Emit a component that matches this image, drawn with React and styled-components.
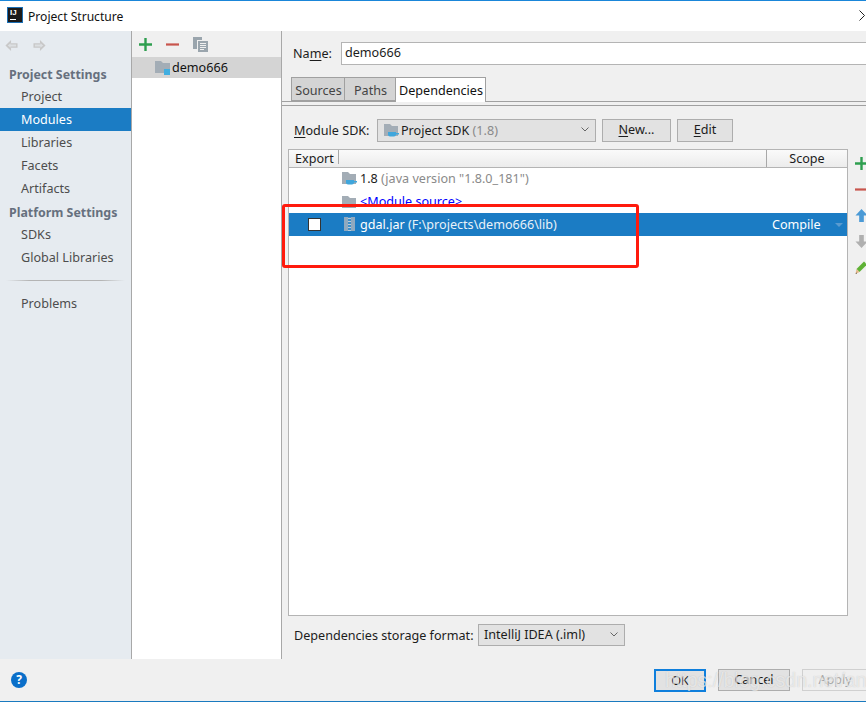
import React from 'react';
import styled, { createGlobalStyle } from 'styled-components';

const GlobalStyle = createGlobalStyle`
  html, body {
    margin: 0;
    padding: 0;
    background: #fff;
  }
  * {
    box-sizing: border-box;
  }
`;

const Window = styled.div`
  position: relative;
  width: 866px;
  height: 702px;
  overflow: hidden;
  display: flex;
  flex-direction: column;
  background: #f0f0f0;
  color: #1c1c1c;
  font-family: 'Noto Sans', 'Open Sans', sans-serif;
  font-size: 12.6px;
  border-top: 1px solid #1a86d9;
  border-bottom: 1px solid #1a7abf;
`;

const TitleBar = styled.div`
  height: 30px;
  flex: none;
  display: flex;
  align-items: center;
  background: #fff;
  padding-left: 7px;
  gap: 5px;
  position: relative;
`;

const TitleText = styled.span`
  font-size: 12.1px;
  color: #111;
`;

const LogoBox = styled.div`
  width: 16px;
  height: 16px;
  margin-top: -2px;
  background: #1a1a1a;
  border: 1px solid #1b6fb5;
  color: #fff;
  font-family: 'Liberation Sans', sans-serif;
  font-size: 8px;
  font-weight: 700;
  line-height: 9px;
  padding-left: 2px;
  position: relative;
  &::after {
    content: '';
    position: absolute;
    left: 2px;
    bottom: 2px;
    width: 6px;
    height: 1px;
    background: #fff;
  }
`;

const CloseGlyph = styled.svg`
  position: absolute;
  right: -2px;
  top: 9px;
`;

const Main = styled.div`
  flex: 1;
  min-height: 0;
  display: flex;
`;

const Sidebar = styled.div`
  width: 132px;
  flex: none;
  background: #e6ebf0;
  border-right: 1px solid #a8a8a8;
`;

const NavArrows = styled.div`
  height: 31px;
  display: flex;
  align-items: center;
  padding: 0 0 3px 5px;
  gap: 15px;
`;

const SectionTitle = styled.div`
  height: 23px;
  line-height: 26px;
  padding-left: 9px;
  font-weight: 700;
  color: #66707e;
  font-size: 12.4px;
`;

const NavItem = styled.div`
  height: 23px;
  line-height: 23px;
  padding-left: 21px;
  color: ${p => (p.$active ? '#fff' : '#4d4d4d')};
  background: ${p => (p.$active ? '#1b7cc4' : 'transparent')};
`;

const NavRule = styled.div`
  height: 1px;
  margin: 11px 6px 11px 6px;
  background: linear-gradient(to right, #e6ebf0, #b4b4b4 20%, #b4b4b4 80%, #e6ebf0);
`;

const ModuleColumn = styled.div`
  width: 150px;
  flex: none;
  display: flex;
  flex-direction: column;
  background: #fff;
  border-right: 1px solid #a8a8a8;
`;

const ModuleToolbar = styled.div`
  height: 26px;
  display: flex;
  align-items: center;
  background: #f0f0f0;
  padding-left: 7px;
  gap: 14px;
`;

const TreeRow = styled.div`
  height: 21px;
  display: flex;
  align-items: center;
  padding: 0 0 1px 23px;
  gap: 1px;
  background: #d4d4d4;
  color: #111;
`;

const Content = styled.div`
  flex: 1;
  min-width: 0;
  display: flex;
  flex-direction: column;
  padding-top: 11px;
  padding-bottom: 13px;
`;

const NameRow = styled.div`
  display: flex;
  align-items: center;
  height: 23px;
  padding-left: 11px;
`;

const NameLabel = styled.span`
  width: 48px;
  flex: none;
`;

const Underlined = styled.span`
  text-decoration: underline;
  text-underline-offset: 2px;
`;

const NameInput = styled.div`
  flex: 1;
  height: 23px;
  line-height: 20px;
  margin-right: -4px;
  padding-left: 3px;
  background: #fff;
  border: 1px solid #b4b4b4;
`;

const TabStrip = styled.div`
  display: flex;
  height: 25px;
  margin-top: 12px;
  padding-left: 9px;
  border-bottom: 1px solid #a0a0a0;
`;

const Tab = styled.div`
  width: ${p => p.$w}px;
  height: ${p => (p.$active ? 25 : 24)}px;
  line-height: 25px;
  padding-left: 1px;
  text-align: center;
  border: 1px solid #a0a0a0;
  border-left: ${p => (p.$first ? '1px solid #a0a0a0' : 'none')};
  border-bottom: ${p => (p.$active ? 'none' : '1px solid #a0a0a0')};
  background: ${p => (p.$active ? '#fff' : '#d4d4d4')};
  color: ${p => (p.$active ? '#111' : '#444')};
`;

const Pane = styled.div`
  flex: 1;
  min-height: 0;
  margin-top: 3px;
  padding: 13px 0 0 6px;
  border-top: 1px solid #a0a0a0;
  display: flex;
  flex-direction: column;
`;

const SdkRow = styled.div`
  display: flex;
  align-items: center;
  height: 23px;
  flex: none;
`;

const FieldLabel = styled.label`
  padding-left: 6px;
  width: ${p => p.$w}px;
  flex: none;
  white-space: nowrap;
`;

const Combo = styled.div`
  width: ${p => p.$w}px;
  height: ${p => p.$h || 23}px;
  display: flex;
  align-items: center;
  gap: 1px;
  padding: 0 0 1px ${p => p.$pad}px;
  background: #e2e2e2;
  border: 1px solid #adadad;
  position: relative;
`;

const Muted = styled.span`
  color: #8a8a8a;
`;

const Chevron = styled.svg`
  position: absolute;
  right: 6px;
  top: 7px;
`;

const PushButton = styled.div`
  width: ${p => p.$w}px;
  height: 23px;
  line-height: 20px;
  margin-left: ${p => p.$ml}px;
  text-align: center;
  background: #e2e2e2;
  border: 1px solid #adadad;
`;

const TableArea = styled.div`
  flex: 1;
  min-height: 0;
  margin-top: 7px;
  display: flex;
`;

const Table = styled.div`
  width: 560px;
  flex: none;
  background: #fff;
  border: 1px solid #b4b4b4;
`;

const TableHead = styled.div`
  height: 18px;
  display: flex;
  background: linear-gradient(#fafafa, #ececec);
  border-bottom: 1px solid #b4b4b4;
  line-height: 17px;
`;

const ExportCol = styled.div`
  width: 50px;
  padding-left: 6px;
  border-right: 1px solid #a8a8a8;
  height: 14px;
`;

const HeadFill = styled.div`
  flex: 1;
`;

const ScopeCol = styled.div`
  width: 81px;
  text-align: center;
  border-left: 1px solid #a8a8a8;
`;

const DepRow = styled.div`
  height: ${p => p.$h}px;
  display: flex;
  align-items: center;
  padding: 0 0 1px 19px;
  background: ${p => (p.$selected ? '#1b7cc4' : '#fff')};
  color: ${p => (p.$selected ? '#fff' : '#1c1c1c')};
  position: relative;
`;

const CheckCell = styled.div`
  width: 13px;
  height: 13px;
  flex: none;
  background: #fff;
  border: 1px solid #333;
`;

const IconCell = styled.div`
  width: ${p => p.$w}px;
  flex: none;
  margin-left: ${p => p.$ml}px;
  display: flex;
  align-items: center;
`;

const SourceLink = styled.span`
  color: #0000ff;
`;

const SelectedMuted = styled.span`
  color: #e8f1f8;
`;

const ScopeValue = styled.span`
  position: absolute;
  left: 483px;
`;

const DropMark = styled.div`
  position: absolute;
  right: 4px;
  top: 10px;
  width: 0;
  height: 0;
  border-left: 4px solid transparent;
  border-right: 4px solid transparent;
  border-top: 4px solid #5a9bd0;
`;

const SideTools = styled.div`
  flex: 1;
  min-width: 0;
  display: flex;
  flex-direction: column;
  align-items: flex-start;
  padding: 8px 0 0 7px;
  gap: 13px;
`;

const StorageRow = styled.div`
  display: flex;
  align-items: center;
  height: 22px;
  flex: none;
  margin-top: 8px;
`;

const Footer = styled.div`
  height: 42px;
  flex: none;
  display: flex;
  align-items: flex-start;
  padding-top: 10px;
  background: #f0f0f0;
  position: relative;
`;

const HelpBadge = styled.div`
  position: absolute;
  left: 11px;
  top: 13px;
  width: 16px;
  height: 16px;
  border-radius: 50%;
  background: #0a6fc9;
  color: #fff;
  font-size: 12px;
  font-weight: 700;
  line-height: 16px;
  text-align: center;
`;

const FooterButtons = styled.div`
  margin-left: 654px;
  display: flex;
  gap: 12px;
`;

const DialogButton = styled.div`
  width: ${p => p.$w}px;
  height: ${p => (p.$default ? 23 : 22)}px;
  flex: none;
  text-align: center;
  background: ${p => (p.$disabled ? '#efefef' : '#e2e2e2')};
  color: ${p => (p.$disabled ? '#a8a8a8' : '#1c1c1c')};
  border: ${p => (p.$default ? '2px solid #0f7fdc' : p.$disabled ? '1px solid #d0d0d0' : '1px solid #adadad')};
  line-height: ${p => (p.$default ? 19 : 20)}px;
`;

const RedFrame = styled.div`
  position: absolute;
  left: 282px;
  top: 203px;
  width: 357px;
  height: 64px;
  border: 3px solid #ff1a0d;
  border-radius: 3px;
  pointer-events: none;
`;

const Watermark = styled.div`
  position: absolute;
  left: 665px;
  top: 667px;
  font-family: 'Liberation Sans', sans-serif;
  font-size: 19.5px;
  line-height: 24px;
  color: rgba(255, 255, 255, 0.62);
  text-shadow: 0 0 1px rgba(110, 110, 110, 0.35);
  white-space: nowrap;
  pointer-events: none;
`;

function ArrowIcon({ flip }) {
  return (
    <svg width="13" height="13" viewBox="0 0 14 14" style={flip ? { transform: 'scaleX(-1)' } : undefined}>
      <path d="M6.5 1 L0.5 7 L6.5 13 V9.5 H13.5 V4.5 H6.5 Z" fill="#c8c8c8" />
      <path d="M6 4.5 L3 7 L6 9.5 V8 H12 V6 H6 Z" fill="#dcdfe2" />
    </svg>
  );
}

function PlusIcon() {
  return (
    <svg width="13" height="13" viewBox="0 0 13 13">
      <path d="M5.3 0 H7.7 V5.3 H13 V7.7 H7.7 V13 H5.3 V7.7 H0 V5.3 H5.3 Z" fill="#2e9e4f" />
    </svg>
  );
}

function MinusIcon() {
  return (
    <svg width="13" height="13" viewBox="0 0 13 13">
      <rect x="0" y="5.4" width="13" height="2.2" fill="#c8554d" />
    </svg>
  );
}

function CopyIcon() {
  return (
    <svg width="15" height="15" viewBox="0 0 15 15">
      <rect x="0" y="0" width="9" height="12" fill="#9aa5ad" />
      <rect x="4" y="3" width="11" height="12" fill="#f0f0f0" />
      <rect x="5" y="4" width="10" height="11" fill="#9aa5ad" />
      <path d="M7 6.5 H13 M7 8.5 H13 M7 10.5 H13 M7 12.5 H11" stroke="#f0f0f0" strokeWidth="1" />
    </svg>
  );
}

function ModuleFolder() {
  return (
    <svg width="16" height="15" viewBox="0 0 16 15">
      <path d="M0 1 H6 L8 3 H15 V13 H0 Z" fill="#a3adb6" />
      <rect x="9" y="9" width="6" height="6" fill="#41aee0" />
    </svg>
  );
}

function SdkFolder() {
  return (
    <svg width="16" height="15" viewBox="0 0 16 15">
      <path d="M0 1 H6 L8 3 H14 V13 H0 Z" fill="#a3adb6" />
      <path d="M4 9 H12 V11.5 Q12 13.5 10 13.5 H6 Q4 13.5 4 11.5 Z" fill="#3fa6dc" />
      <path d="M12 10 H15 V11.5 H12 Z" fill="#3fa6dc" />
    </svg>
  );
}

function PlainFolder() {
  return (
    <svg width="16" height="13" viewBox="0 0 16 13">
      <path d="M0 1 H6 L8 3 H14 V13 H0 Z" fill="#a3adb6" />
    </svg>
  );
}

function JarIcon() {
  return (
    <svg width="11" height="14" viewBox="0 0 11 14">
      <rect x="0" y="0" width="11" height="14" fill="#8fa9bf" />
      <rect x="4" y="0" width="3" height="14" fill="#3f8fc9" />
      <path d="M4 1.5 H7 M4 4.5 H7 M4 7.5 H7 M4 10.5 H7 M4 13.5 H7" stroke="#b9ccdb" strokeWidth="1" />
    </svg>
  );
}

function UpIcon({ color }) {
  return (
    <svg width="13" height="13" viewBox="0 0 13 14">
      <path d="M6.5 0 L13 7 H9 V14 H4 V7 H0 Z" fill={color} />
    </svg>
  );
}

function DownIcon({ color }) {
  return (
    <svg width="13" height="13" viewBox="0 0 13 14">
      <path d="M6.5 14 L13 7 H9 V0 H4 V7 H0 Z" fill={color} />
    </svg>
  );
}

function PencilIcon() {
  return (
    <svg width="13" height="13" viewBox="0 0 12 13">
      <path d="M8.5 0.5 L11.5 3.5 L4 11 L1 8 Z" fill="#5fb236" />
      <path d="M1 8 L4 11 L0 13 Z" fill="#e3b98a" />
      <path d="M0 13 L1 11.5 L1.6 12.3 Z" fill="#333" />
    </svg>
  );
}

function ChevronDown() {
  return (
    <Chevron width="8" height="5" viewBox="0 0 8 5">
      <path d="M0.5 0.5 L4 4 L7.5 0.5" fill="none" stroke="#666" strokeWidth="1" />
    </Chevron>
  );
}

export default function App() {
  return (
    <>
      <GlobalStyle />
      <Window>
        <TitleBar>
          <LogoBox>IJ</LogoBox>
          <TitleText>Project Structure</TitleText>
          <CloseGlyph width="9" height="11" viewBox="0 0 9 11">
            <path d="M0.5 0.5 L5.5 5.5 L0.5 10.5" fill="none" stroke="#222" strokeWidth="1" />
          </CloseGlyph>
        </TitleBar>
        <Main>
          <Sidebar>
            <NavArrows>
              <ArrowIcon />
              <ArrowIcon flip />
            </NavArrows>
            <SectionTitle>Project Settings</SectionTitle>
            <NavItem>Project</NavItem>
            <NavItem $active>Modules</NavItem>
            <NavItem>Libraries</NavItem>
            <NavItem>Facets</NavItem>
            <NavItem>Artifacts</NavItem>
            <SectionTitle>Platform Settings</SectionTitle>
            <NavItem>SDKs</NavItem>
            <NavItem>Global Libraries</NavItem>
            <NavRule />
            <NavItem>Problems</NavItem>
          </Sidebar>
          <ModuleColumn>
            <ModuleToolbar>
              <PlusIcon />
              <MinusIcon />
              <CopyIcon />
            </ModuleToolbar>
            <TreeRow>
              <ModuleFolder />
              demo666
            </TreeRow>
          </ModuleColumn>
          <Content>
            <NameRow>
              <NameLabel>Na<Underlined>m</Underlined>e:</NameLabel>
              <NameInput>demo666</NameInput>
            </NameRow>
            <TabStrip>
              <Tab $w={54} $first>Sources</Tab>
              <Tab $w={51}>Paths</Tab>
              <Tab $w={90} $active>Dependencies</Tab>
            </TabStrip>
            <Pane>
              <SdkRow>
                <FieldLabel $w={89}><Underlined>M</Underlined>odule SDK:</FieldLabel>
                <Combo $w={219} $pad={6}>
                  <SdkFolder />
                  <span>Project SDK <Muted>(1.8)</Muted></span>
                  <ChevronDown />
                </Combo>
                <PushButton $w={69} $ml={6}><Underlined>N</Underlined>ew...</PushButton>
                <PushButton $w={56} $ml={6}><Underlined>E</Underlined>dit</PushButton>
              </SdkRow>
              <TableArea>
                <Table>
                  <TableHead>
                    <ExportCol>Export</ExportCol>
                    <HeadFill />
                    <ScopeCol>Scope</ScopeCol>
                  </TableHead>
                  <DepRow $h={22}>
                    <IconCell $w={18} $ml={34}><SdkFolder /></IconCell>
                    <span>1.8 <Muted>(java version "1.8.0_181")</Muted></span>
                  </DepRow>
                  <DepRow $h={23}>
                    <IconCell $w={18} $ml={34}><PlainFolder /></IconCell>
                    <SourceLink>&lt;Module source&gt;</SourceLink>
                  </DepRow>
                  <DepRow $h={23} $selected>
                    <CheckCell />
                    <IconCell $w={16} $ml={23}><JarIcon /></IconCell>
                    <span>gdal.jar <SelectedMuted>(F:\projects\demo666\lib)</SelectedMuted></span>
                    <ScopeValue>Compile</ScopeValue>
                    <DropMark />
                  </DepRow>
                </Table>
                <SideTools>
                  <PlusIcon />
                  <MinusIcon />
                  <UpIcon color="#4b9ad6" />
                  <DownIcon color="#b0b0b0" />
                  <PencilIcon />
                </SideTools>
              </TableArea>
              <StorageRow>
                <FieldLabel $w={190}>Dependencies storage format:</FieldLabel>
                <Combo $w={147} $h={22} $pad={5}>
                  IntelliJ IDEA (.iml)
                  <ChevronDown />
                </Combo>
              </StorageRow>
            </Pane>
          </Content>
        </Main>
        <Footer>
          <HelpBadge>?</HelpBadge>
          <FooterButtons>
            <DialogButton $w={52} $default>OK</DialogButton>
            <DialogButton $w={72}>Cancel</DialogButton>
            <DialogButton $w={66} $disabled>Apply</DialogButton>
          </FooterButtons>
        </Footer>
        <RedFrame />
        <Watermark>https://blog.csdn.net/anthia</Watermark>
      </Window>
    </>
  );
}
